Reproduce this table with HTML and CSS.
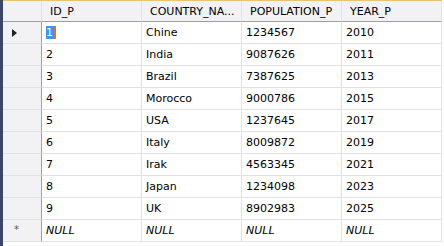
FILE: index.html
```html
<!DOCTYPE html>
<html>
<head>
    <meta charset="UTF-8">
    <title>Results</title>
    <link rel="stylesheet" href="styles.css">
</head>
<body>
    <div class="frame">
        <div class="edge"></div>
        <div class="results">
            <div class="row head">
                <div class="sel"></div>
                <div class="cell">ID_P</div>
                <div class="cell">COUNTRY_NA...</div>
                <div class="cell">POPULATION_P</div>
                <div class="cell">YEAR_P</div>
            </div>
            <div class="row">
                <div class="sel"><span class="arrow"></span></div>
                <div class="cell"><span class="current">1</span></div>
                <div class="cell">Chine</div>
                <div class="cell">1234567</div>
                <div class="cell">2010</div>
            </div>
            <div class="row">
                <div class="sel"></div>
                <div class="cell">2</div>
                <div class="cell">India</div>
                <div class="cell">9087626</div>
                <div class="cell">2011</div>
            </div>
            <div class="row">
                <div class="sel"></div>
                <div class="cell">3</div>
                <div class="cell">Brazil</div>
                <div class="cell">7387625</div>
                <div class="cell">2013</div>
            </div>
            <div class="row">
                <div class="sel"></div>
                <div class="cell">4</div>
                <div class="cell">Morocco</div>
                <div class="cell">9000786</div>
                <div class="cell">2015</div>
            </div>
            <div class="row">
                <div class="sel"></div>
                <div class="cell">5</div>
                <div class="cell">USA</div>
                <div class="cell">1237645</div>
                <div class="cell">2017</div>
            </div>
            <div class="row">
                <div class="sel"></div>
                <div class="cell">6</div>
                <div class="cell">Italy</div>
                <div class="cell">8009872</div>
                <div class="cell">2019</div>
            </div>
            <div class="row">
                <div class="sel"></div>
                <div class="cell">7</div>
                <div class="cell">Irak</div>
                <div class="cell">4563345</div>
                <div class="cell">2021</div>
            </div>
            <div class="row">
                <div class="sel"></div>
                <div class="cell">8</div>
                <div class="cell">Japan</div>
                <div class="cell">1234098</div>
                <div class="cell">2023</div>
            </div>
            <div class="row">
                <div class="sel"></div>
                <div class="cell">9</div>
                <div class="cell">UK</div>
                <div class="cell">8902983</div>
                <div class="cell">2025</div>
            </div>
            <div class="row new">
                <div class="sel"><span class="star">*</span></div>
                <div class="cell">NULL</div>
                <div class="cell">NULL</div>
                <div class="cell">NULL</div>
                <div class="cell">NULL</div>
            </div>
        </div>
    </div>
</body>
</html>
```

FILE: styles.css
```css
body {
    margin: 0;
    background-color: #fff;
    font-family: "DejaVu Sans", Tahoma, sans-serif;
    font-size: 11px;
    color: #000;
}

.frame {
    display: flex;
    height: 246px;
}

.edge {
    width: 3px;
    background-color: #3b4565;
}

.results {
    border-top: 1px solid #e9c46f;
    width: 439px;
    background-color: #fff;
}

.row {
    display: grid;
    grid-template-columns: 39px 100px 100px 100px 100px;
    height: 22px;
}

.sel {
    position: relative;
    background-color: #f2f2f4;
    border-right: 1px solid #a0a0a0;
    border-bottom: 1px solid #e2e2e2;
}

.cell {
    display: flex;
    align-items: center;
    padding-left: 4px;
    border-right: 1px solid #e2e2e2;
    border-bottom: 1px solid #e2e2e2;
    white-space: nowrap;
    overflow: hidden;
}

/* header row */
.head {
    height: 21px;
}

.head .sel,
.head .cell {
    background-color: #f2f2f5;
    border-bottom: 1px solid #a0a0a0;
}

.head .cell {
    padding-left: 8px;
}

.head .sel {
    border-right: 1px solid #e2e2e2;
}

.new .cell {
    font-style: italic;
}

.current {
    background-color: #3399ff;
    color: #fff;
    border-right: 2px solid #e07020;
    padding: 0 1px 0 0;
}

.arrow {
    position: absolute;
    left: 9px;
    top: 7px;
    border-left: 5px solid #222;
    border-top: 4px solid transparent;
    border-bottom: 4px solid transparent;
}

.star {
    position: absolute;
    left: 11px;
    top: 4px;
    font-size: 10px;
    color: #555;
}
```
